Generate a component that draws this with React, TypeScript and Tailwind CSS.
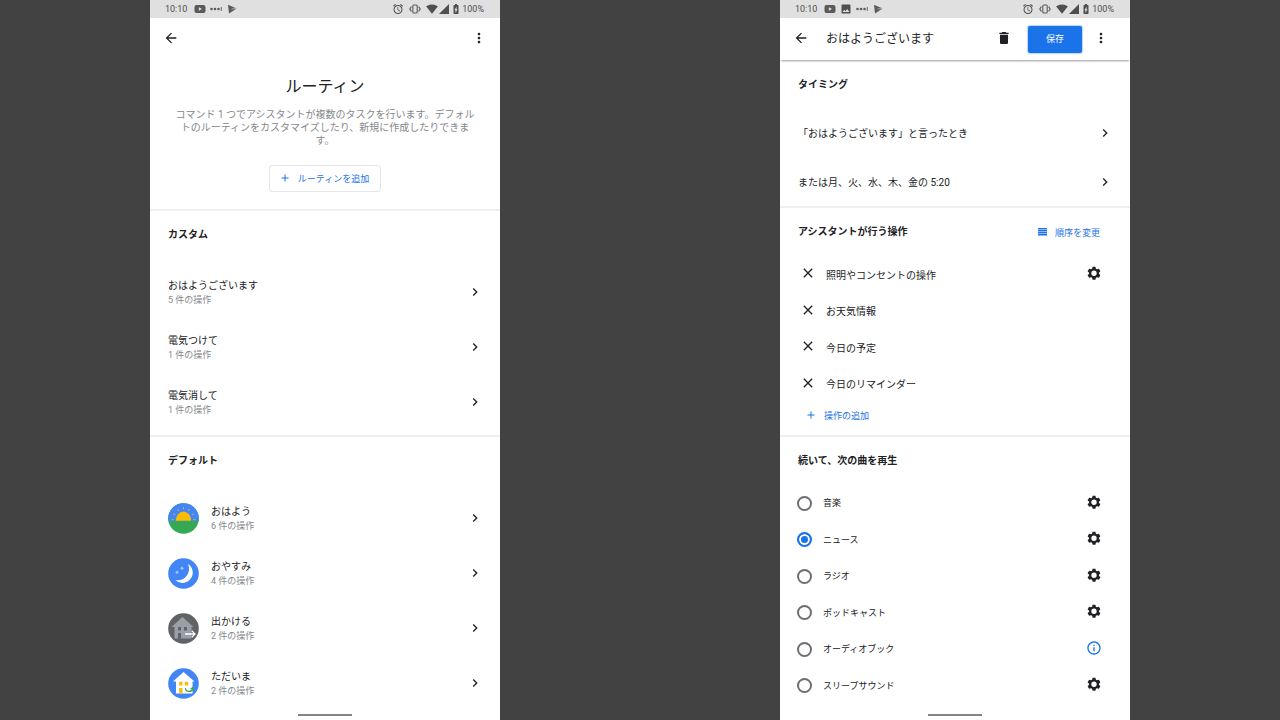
import type { ReactNode } from "react";
import {
  MdAdd,
  MdAlarm,
  MdArrowBack,
  MdBatteryChargingFull,
  MdChevronRight,
  MdClose,
  MdDelete,
  MdImage,
  MdInfoOutline,
  MdMoreVert,
  MdSignalCellular4Bar,
  MdSignalWifi4Bar,
} from "react-icons/md";

function GearIcon() {
  return (
    <svg viewBox="0.5 0.5 23 23" className="size-[14px]" fill="currentColor" aria-hidden="true">
      <path
        fillRule="evenodd"
        d="M9.700 1.800h4.600l.8 3.200 1.800 1 3.200-1 2.400 4.300-2.400 2.200v1.800l2.400 2.200-2.400 4.300-3.200-1-1.800 1-.8 3.200H9.700l-.8-3.200-1.800-1-3.200 1-2.400-4.300 2.400-2.200v-1.800L1.500 9.300 3.900 5l3.200 1 1.800-1zM12 8a4.400 4.400 0 1 0 0 8.800 4.400 4.400 0 0 0 0-8.800z"
      />
    </svg>
  );
}

function ReorderIcon() {
  return (
    <svg viewBox="0 0 12 12" className="size-3" fill="#1a73e8" aria-hidden="true">
      <path d="M1 1h9v1.400H1zM1 3h9v1.400H1zM1 5h9v1.400H1zM1 7h9v1.400H1z" />
    </svg>
  );
}

function VideoIcon() {
  return (
    <svg viewBox="0 0 12 10" className="h-[10px] w-3" aria-hidden="true">
      <rect x="0.500" y="1" width="11" height="8" rx="2" fill="#5a5a5a" />
      <path d="M4.800 3.200v3.600L8 5z" fill="#e0e0e0" />
    </svg>
  );
}

function DotsIcon() {
  return (
    <svg viewBox="0 0 12 10" className="h-[10px] w-3" fill="#5a5a5a" aria-hidden="true">
      <circle cx="1.500" cy="5" r="1.300" />
      <circle cx="5" cy="5" r="1.300" />
      <circle cx="8.500" cy="5" r="1.300" />
      <rect x="10.800" y="3" width="0.900" height="4" />
    </svg>
  );
}

function StoreIcon() {
  return (
    <svg viewBox="0 0 12 10" className="h-[10px] w-3" aria-hidden="true">
      <path d="M2 .8 10.700 4.500 3 9.500z" fill="#5a5a5a" />
      <path d="m5.500 5 5.500-.6" stroke="#e0e0e0" strokeWidth="0.600" fill="none" />
    </svg>
  );
}

function VibrateIcon() {
  return (
    <svg viewBox="0 0 12 12" className="size-3" fill="none" stroke="#5a5a5a" strokeWidth="1.100" aria-hidden="true">
      <rect x="3.800" y="2" width="4.400" height="8" rx="1" />
      <path d="M2.400 3.600.800 6l1.600 2.400M9.600 3.600 11.200 6 9.600 8.400" />
    </svg>
  );
}

function StatusBar({ withImage = false }: { withImage?: boolean }) {
  return (
    <div className="flex h-[18px] shrink-0 items-center justify-between bg-[#e0e0e0] pl-[15px] pr-4 text-[9px] leading-[18px] text-[#4f4f4f]">
      <div className="flex items-center gap-1">
        <span className="mr-[3px]">10:10</span>
        <VideoIcon />
        {withImage && <MdImage className="size-3" />}
        <DotsIcon />
        <StoreIcon />
      </div>
      <div className="flex items-center">
        <MdAlarm className="mr-[5px] size-3" />
        <VibrateIcon />
        <MdSignalWifi4Bar className="ml-[5px] size-3" />
        <MdSignalCellular4Bar className="size-3" />
        <MdBatteryChargingFull className="size-3" />
        <span>100%</span>
      </div>
    </div>
  );
}

function HomeBar() {
  return (
    <div className="mt-auto flex h-[6px] shrink-0 justify-center">
      <div className="h-0.5 w-[54px] bg-[#858585]" />
    </div>
  );
}

function Phone({ children, className }: { children: ReactNode; className: string }) {
  return <main className={`flex min-w-0 flex-col bg-white ${className}`}>{children}</main>;
}

function SectionTitle({ children }: { children: ReactNode }) {
  return <h2 className="flex h-[46px] items-center px-[18px] pt-0.5 font-bold">{children}</h2>;
}

function RoutineRow({ title, count, icon }: { title: string; count: number; icon?: ReactNode }) {
  return (
    <li>
      <a href="#routine" className="flex h-[55px] items-center pl-[18px] pr-[17px]">
        {icon && <span className="mr-3 shrink-0">{icon}</span>}
        <span className="flex flex-1 flex-col pt-px leading-[14px]">
          <span>{title}</span>
          <span className="text-[9px] leading-[14px] text-[#85888c]">{count} 件の操作</span>
        </span>
        <MdChevronRight className="mb-0.5 size-4" stroke="currentColor" />
      </a>
    </li>
  );
}

function MorningIcon() {
  return (
    <svg viewBox="0 0 31 31" className="size-[31px]" aria-hidden="true">
      <circle cx="15.500" cy="15.500" r="15.300" fill="#34a853" />
      <path d="M.37 17.800a15.300 15.300 0 1 1 30.260 0z" fill="#4285f4" />
      <path d="M7.800 17.800a7.700 9.300 0 0 1 15.400 0z" fill="#fbbc04" />
      <g stroke="#b9a766" strokeWidth="1.100">
        <path d="M15.500 4v2.500M9.500 5.800l1.200 2.200M21.500 5.800l-1.200 2.200M5.200 10.800l2 1.200M25.800 10.800l-2 1.200M3.500 16.600h2.300M25.200 16.600h2.300" />
      </g>
    </svg>
  );
}

function NightIcon() {
  return (
    <svg viewBox="0 0 31 31" className="size-[31px]" aria-hidden="true">
      <circle cx="15.500" cy="15.500" r="15.300" fill="#4285f4" />
      <path d="M20 6A10.300 10.300 0 1 1 7.200 22 11.500 11.500 0 0 0 20 6z" fill="#fff" />
      <g fill="#a9c8ff">
        <path d="m14 8 .7 1.600 1.600.7-1.600.7L14 12.600l-.7-1.600-1.600-.7 1.600-.7z" />
        <path d="m9 12 .7 1.600 1.600.7-1.600.7L9 16.600 8.300 15l-1.600-.7 1.600-.7z" />
      </g>
    </svg>
  );
}

function LeaveIcon() {
  return (
    <svg viewBox="0 0 31 31" className="size-[31px]" aria-hidden="true">
      <circle cx="15.500" cy="15.500" r="15.300" fill="#5f6368" />
      <path d="M14.500 4 25.500 14h-2v11.500h-17V14h-3z" fill="#9aa0a6" />
      <path d="M10 14h3v3.500h-3zM16 14h3v3.500h-3zM10 20h3v5.500h-3z" fill="#5f6368" />
      <path d="M17 21h9.800M23.800 17.800l3.200 3.200-3.200 3.200" stroke="#fff" strokeWidth="1.300" fill="none" />
    </svg>
  );
}

function HomeIcon() {
  return (
    <svg viewBox="0 0 31 31" className="size-[31px]" aria-hidden="true">
      <circle cx="15.500" cy="15.500" r="15.300" fill="#4285f4" />
      <path d="M15.500 4 26.500 13.500h-2V25.500H8V13.500H5z" fill="#fff" />
      <path d="M11.200 13.800h3.300v3.700h-3.300zM16.800 13.800h3.300v3.700h-3.300zM11.200 20h3.300v5.500h-3.300z" fill="#fbbc04" />
      <path d="M17.500 20c0 4.500 6.500 4.500 7.500.5M22.500 21l2.500-1.500 1 2.800" stroke="#34a853" strokeWidth="1.200" fill="none" />
    </svg>
  );
}

const customRoutines = [
  { title: "おはようございます", count: 5 },
  { title: "電気つけて", count: 1 },
  { title: "電気消して", count: 1 },
];

const defaultRoutines = [
  { title: "おはよう", count: 6, icon: <MorningIcon /> },
  { title: "おやすみ", count: 4, icon: <NightIcon /> },
  { title: "出かける", count: 2, icon: <LeaveIcon /> },
  { title: "ただいま", count: 2, icon: <HomeIcon /> },
];

const triggers = ["「おはようございます」と言ったとき", "または月、火、水、木、金の 5:20"];

const actions = [
  { label: "照明やコンセントの操作", configurable: true },
  { label: "お天気情報", configurable: false },
  { label: "今日の予定", configurable: false },
  { label: "今日のリマインダー", configurable: false },
];

const media = ["音楽", "ニュース", "ラジオ", "ポッドキャスト", "オーディオブック", "スリープサウンド"];

function RoutineList() {
  return (
    <Phone className="col-start-2">
      <StatusBar />
      <header className="flex h-10 items-center justify-between pl-[13px] pr-[13px]">
        <button type="button" aria-label="戻る">
          <MdArrowBack className="size-4" />
        </button>
        <button type="button" aria-label="その他">
          <MdMoreVert className="size-4" />
        </button>
      </header>
      <section className="flex flex-col items-center border-b-2 border-[#efefef] px-[22px] pb-[17px] pt-[17px] text-center">
        <h1 className="text-[16px] leading-6">ルーティン</h1>
        <p className="mt-[9px] leading-[13px] text-[#85888c]">
          コマンド 1 つでアシスタントが複数のタスクを行います。デフォルトのルーティンをカスタマイズしたり、新規に作成したりできます。
        </p>
        <button
          type="button"
          className="mt-[18px] flex h-[27px] items-center gap-[7px] rounded-[3px] border border-[#e4e6e9] pl-[9px] pr-[11px] text-[9px] text-[#1a73e8]"
        >
          <MdAdd className="mb-0.5 size-3" stroke="currentColor" />
          ルーティンを追加
        </button>
      </section>
      <section className="border-b-2 border-[#efefef] pb-[5px]">
        <SectionTitle>カスタム</SectionTitle>
        <ul className="mt-2">
          {customRoutines.map((r) => (
            <RoutineRow key={r.title} {...r} />
          ))}
        </ul>
      </section>
      <section>
        <SectionTitle>デフォルト</SectionTitle>
        <ul className="mt-2">
          {defaultRoutines.map((r) => (
            <RoutineRow key={r.title} {...r} />
          ))}
        </ul>
      </section>
      <HomeBar />
    </Phone>
  );
}

function RoutineEditor() {
  return (
    <Phone className="col-start-4">
      <StatusBar withImage />
      <header className="flex h-[42px] items-center pl-[13px] pr-[21px] shadow-[0_2px_2px_-1px_rgba(0,0,0,0.400)]">
        <button type="button" aria-label="戻る">
          <MdArrowBack className="mb-0.5 size-4" />
        </button>
        <h1 className="ml-[17px] flex-1 text-[12px] leading-5">おはようございます</h1>
        <button type="button" aria-label="削除">
          <MdDelete className="mb-0.5 size-4" />
        </button>
        <button
          type="button"
          className="ml-4 mr-[11px] h-[27px] w-[54px] rounded-[2px] bg-[#1a73e8] text-[9px] text-white shadow-[0_0_1px_1px_rgba(26,115,232,0.300)]"
        >
          保存
        </button>
        <button type="button" aria-label="その他">
          <MdMoreVert className="mb-0.5 size-4" />
        </button>
      </header>
      <section className="border-b-2 border-[#efefef] pt-px">
        <SectionTitle>タイミング</SectionTitle>
        <ul className="pt-px">
          {triggers.map((t) => (
            <li key={t}>
              <a href="#trigger" className="flex h-[49px] items-center justify-between pl-[18px] pr-[17px]">
                <span className="pt-0.5">{t}</span>
                <MdChevronRight className="size-4" stroke="currentColor" />
              </a>
            </li>
          ))}
        </ul>
      </section>
      <section className="border-b-2 border-[#efefef] pb-[5px]">
        <div className="flex items-center justify-between pr-[30px]">
          <SectionTitle>アシスタントが行う操作</SectionTitle>
          <button type="button" className="flex items-center gap-[6px] pt-[3px] text-[9px] text-[#1a73e8]">
            <ReorderIcon />
            順序を変更
          </button>
        </div>
        <ul className="mt-[2px] grid h-[146px] grid-rows-4 pl-5 pr-7">
          {actions.map((a) => (
            <li key={a.label} className="flex items-center">
              <button type="button" aria-label={`${a.label}を削除`} className="mb-0.5 mr-[10px]">
                <MdClose className="size-4" />
              </button>
              <span className="flex-1 pt-[3px]">{a.label}</span>
              {a.configurable && (
                <button type="button" aria-label={`${a.label}の設定`} className="mb-[3px] mr-px">
                  <GearIcon />
                </button>
              )}
            </li>
          ))}
        </ul>
        <button type="button" className="ml-[25px] flex h-7 items-center gap-[7px] text-[9px] text-[#1a73e8]">
          <MdAdd className="mb-0.5 size-3" stroke="currentColor" />
          操作の追加
        </button>
      </section>
      <section>
        <SectionTitle>続いて、次の曲を再生</SectionTitle>
        <ul className="mt-[2px] grid h-[219px] grid-rows-6 pl-[17px] pr-7">
          {media.map((m) => (
            <li key={m} className="flex items-center justify-between">
              <label className="flex items-center gap-[11px] text-[9px]">
                <input
                  type="radio"
                  name="media"
                  defaultChecked={m === "ニュース"}
                  className="size-[15px] appearance-none rounded-full border-2 border-[#6b6e72] checked:border-[#1a73e8] checked:bg-[#1a73e8] checked:shadow-[inset_0_0_0_2px_white]"
                />
                {m}
              </label>
              {m === "オーディオブック" ? (
                <button type="button" aria-label={`${m}の情報`} className="mb-[3px] text-[#1a73e8]">
                  <MdInfoOutline className="size-4" />
                </button>
              ) : (
                <button type="button" aria-label={`${m}の設定`} className="mb-[3px] mr-px">
                  <GearIcon />
                </button>
              )}
            </li>
          ))}
        </ul>
      </section>
      <HomeBar />
    </Phone>
  );
}

export default function App() {
  return (
    <div
      lang="ja"
      className="grid min-h-screen grid-cols-[15fr_35fr_28fr_35fr_15fr] bg-[#424242] font-[Roboto,'Noto_Sans_CJK_JP',sans-serif] text-[10px] leading-4 text-[#202124]"
    >
      <RoutineList />
      <RoutineEditor />
    </div>
  );
}
